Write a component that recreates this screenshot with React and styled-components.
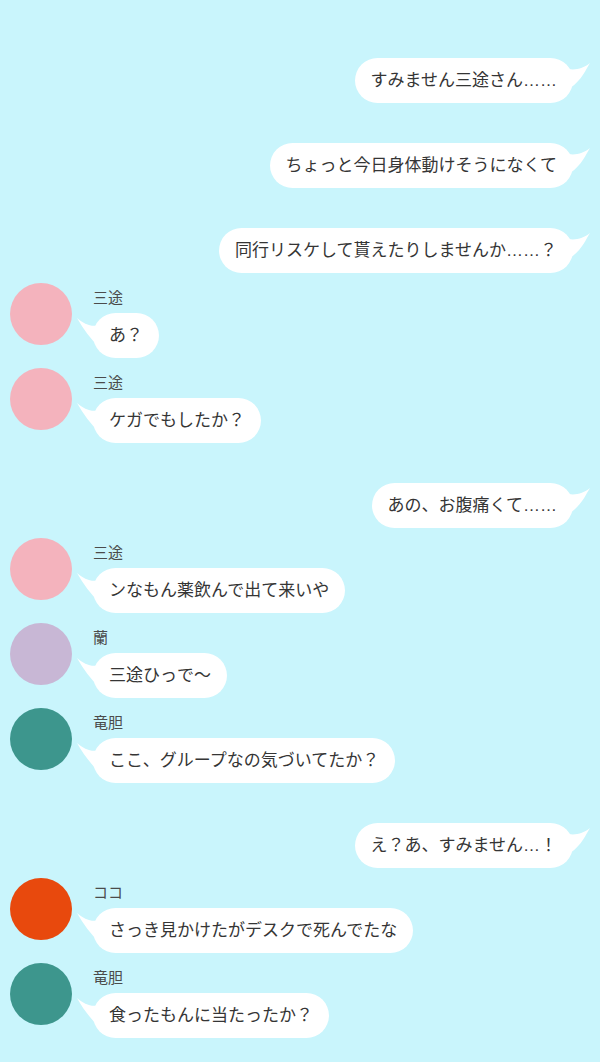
import React from 'react';
import styled, { createGlobalStyle } from 'styled-components';

const GlobalStyle = createGlobalStyle`
  html, body {
    margin: 0;
    padding: 0;
    background: #c9f5fc;
  }
  body {
    font-family: "Liberation Sans", "Noto Sans CJK JP", sans-serif;
  }
`;

const Chat = styled.main`
  width: 600px;
  min-height: 1062px;
  padding-top: 18px;
  box-sizing: border-box;
  background: #c9f5fc;
`;

const Row = styled.div`
  height: 85px;
  display: flex;
  justify-content: ${(p) => (p.$mine ? 'flex-end' : 'flex-start')};
  align-items: ${(p) => (p.$mine ? 'flex-end' : 'flex-start')};
  padding: ${(p) => (p.$mine ? '0 27px 0 0' : '0 0 0 10px')};
  gap: 21px;
`;

const Avatar = styled.div`
  width: 62px;
  height: 62px;
  margin-top: 10px;
  border-radius: 50%;
  background: ${(p) => p.$color};
  flex-shrink: 0;
`;

const Body = styled.div`
  display: flex;
  flex-direction: column;
  align-items: flex-start;
  padding-top: 15px;
  gap: 5px;
`;

const Name = styled.div`
  font-size: 15px;
  line-height: 20px;
  color: #4b4b4b;
`;

const Bubble = styled.div`
  position: relative;
  height: 45px;
  line-height: 45px;
  padding: 0 16px;
  border-radius: 23px;
  background: #fff;
  color: #353535;
  font-size: 17px;
  white-space: nowrap;
`;

const Tail = styled.svg`
  position: absolute;
  top: 0;
  ${(p) => (p.$mine ? 'right: -20px;' : 'left: -18px;')}
  width: 30px;
  height: 40px;
  overflow: visible;
`;

const RightTail = () => (
  <Tail $mine viewBox="0 0 30 40">
    <path d="M2 10 C10 13 20 11 27 5 C23 11 19 22 7 30 L2 30 Z" fill="#fff" />
  </Tail>
);

const LeftTail = () => (
  <Tail viewBox="0 0 30 40">
    <path d="M2 5 C10 12 18 15 28 11 L30 11 L30 34 L24 34 C16 26 8 16 2 5 Z" fill="#fff" />
  </Tail>
);

const people = {
  sanzu: { name: '三途', color: '#f4b3bd' },
  ran: { name: '蘭', color: '#c8b7d5' },
  rindo: { name: '竜胆', color: '#3d968d' },
  koko: { name: 'ココ', color: '#e8490d' },
};

const messages = [
  { mine: true, text: 'すみません三途さん……' },
  { mine: true, text: 'ちょっと今日身体動けそうになくて' },
  { mine: true, text: '同行リスケして貰えたりしませんか……？' },
  { who: 'sanzu', text: 'あ？' },
  { who: 'sanzu', text: 'ケガでもしたか？' },
  { mine: true, text: 'あの、お腹痛くて……' },
  { who: 'sanzu', text: 'ンなもん薬飲んで出て来いや' },
  { who: 'ran', text: '三途ひっで〜' },
  { who: 'rindo', text: 'ここ、グループなの気づいてたか？' },
  { mine: true, text: 'え？あ、すみません…！' },
  { who: 'koko', text: 'さっき見かけたがデスクで死んでたな' },
  { who: 'rindo', text: '食ったもんに当たったか？' },
];

const App = () => (
  <>
    <GlobalStyle />
    <Chat>
      {messages.map((m, i) =>
        m.mine ? (
          <Row key={i} $mine>
            <Bubble>
              <RightTail />
              {m.text}
            </Bubble>
          </Row>
        ) : (
          <Row key={i}>
            <Avatar $color={people[m.who].color} />
            <Body>
              <Name>{people[m.who].name}</Name>
              <Bubble>
                <LeftTail />
                {m.text}
              </Bubble>
            </Body>
          </Row>
        )
      )}
    </Chat>
  </>
);

export default App;
